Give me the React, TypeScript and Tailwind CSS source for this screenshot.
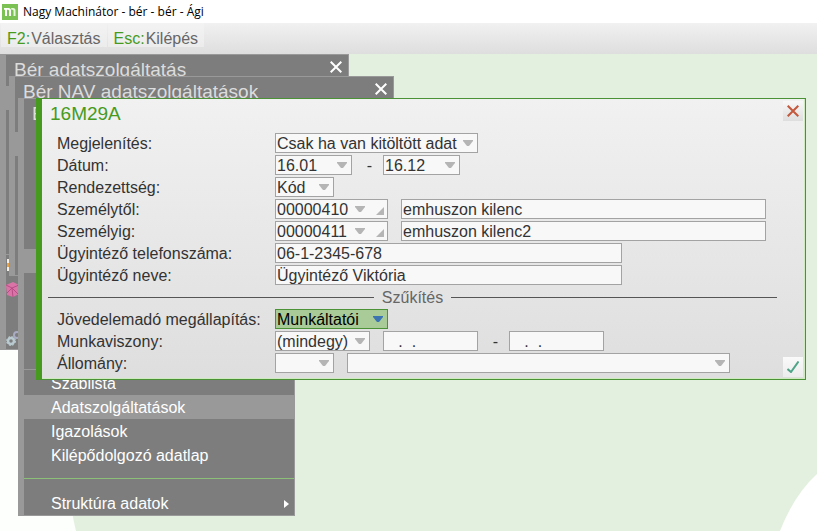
import type { ReactNode } from "react";

function Backdrop() {
  return (
    <svg className="absolute inset-0 h-full w-full" viewBox="0 0 817 477" preserveAspectRatio="none" aria-hidden="true">
      <rect width="817" height="477" fill="#e4f0df" />
      <path d="M0 0H130Q40 330 76 477H0Z" fill="#fcfffb" />
      <path d="M817 420Q794 441 780 477H817Z" fill="#fff" />
    </svg>
  );
}

function Logo() {
  return (
    <svg width="16" height="16" viewBox="0 0 16 16" aria-hidden="true">
      <rect width="16" height="16" fill="#7cc153" />
      <path d="M2 4H6.500Q9 4 9 6.500V12H7V7Q7 5.800 6 5.800H5V12H3V5.800H2Z" fill="#fff" />
      <path d="M9 4H11Q13.500 4 13.500 6.500V12H11.500V7Q11.500 5.800 10.500 5.800H9.500Z" fill="#e6f6da" />
    </svg>
  );
}

function Cross() {
  return (
    <svg width="12" height="12" viewBox="0 0 12 12" aria-hidden="true">
      <path d="M0.700 0.700L11.300 11.300M11.300 0.700L0.700 11.300" stroke="currentColor" strokeWidth="2" fill="none" />
    </svg>
  );
}

function Arrow() {
  return (
    <svg width="10" height="6" viewBox="0 0 10 6" aria-hidden="true">
      <path d="M0 0H10V1L6 6H4L0 1Z" fill="currentColor" />
    </svg>
  );
}

function MenuHeader({ title }: { title: string }) {
  return (
    <div className="flex h-[31px] items-start justify-between pl-2 pr-[6px] pt-[4px] text-[19px] leading-[22px] text-[#dcdcdc]">
      <span>{title}</span>
      <button type="button" aria-label="Bezárás" className="mt-[2px] text-white">
        <Cross />
      </button>
    </div>
  );
}

function MenuRow({ label, active, more }: { label: string; active?: boolean; more?: boolean }) {
  return (
    <button
      type="button"
      className={`flex h-6 w-full items-center justify-between pl-[27px] pr-[5px] pt-[2px] text-left text-[16px] leading-[22px] text-white ${active ? "bg-[#999]" : ""}`}
    >
      {label}
      {more && (
        <svg width="5" height="8" viewBox="0 0 5 8" aria-hidden="true">
          <path d="M0 0L5 4L0 8Z" fill="#fff" />
        </svg>
      )}
    </button>
  );
}

type PickProps = { id?: string; label?: string; value: string; width: string; selected?: boolean; corner?: boolean };

function Pick({ id, label, value, width, selected, corner }: PickProps) {
  return (
    <div className={`relative h-5 ${width}`}>
      <select
        id={id}
        aria-label={label}
        className={`block h-5 w-full appearance-none border pl-px pt-px text-[16px] leading-[18px] outline-none ${
          selected ? "border-[#4b9135] bg-[#a9cb97] text-black" : "border-[#a3a3a3] bg-[#f8f8f8] text-[#333]"
        }`}
      >
        <option>{value}</option>
      </select>
      <span
        className={`pointer-events-none absolute top-[7px] ${corner ? "right-[23px]" : "right-[5px]"} ${
          selected ? "text-[#3b74b0]" : "text-[#b5b5b5]"
        }`}
      >
        <Arrow />
      </span>
      {corner && (
        <svg className="pointer-events-none absolute right-1 top-2" width="8" height="8" viewBox="0 0 8 8" aria-hidden="true">
          <path d="M8 0V8H0Z" fill="#b5b5b5" />
        </svg>
      )}
    </div>
  );
}

type FieldProps = { id?: string; label?: string; value: string; width: string };

function Field({ id, label, value, width }: FieldProps) {
  return (
    <input
      id={id}
      aria-label={label}
      defaultValue={value}
      className={`block h-5 border border-[#a3a3a3] bg-[#f8f8f8] pl-px pt-px text-[16px] leading-[18px] text-[#333] outline-none ${width}`}
    />
  );
}

function Row({ label, htmlFor, children }: { label: string; htmlFor: string; children: ReactNode }) {
  return (
    <div className="flex h-5 items-center">
      <label htmlFor={htmlFor} className="w-[218px] shrink-0 whitespace-nowrap pt-[2px]">
        {label}
      </label>
      {children}
    </div>
  );
}

function Dash() {
  return <span className="w-[31px] pl-1 pt-[2px] text-center">-</span>;
}

function FilterDialog() {
  return (
    <section className="absolute left-9 right-[11px] top-[44px] border border-l-[6px] border-[#4b9135] border-l-[#469b1f] bg-linear-to-b from-[#f1f1f1] to-[#dedede] pb-[6px] text-[16px] leading-5 text-[#333] shadow-[inset_-1px_-1px_0_#cdebbf]">
      <header className="flex h-[34px] items-start justify-between pl-2 pr-[2px] pt-[2px]">
        <h1 className="pt-[2px] text-[19px] leading-[22px] text-[#469b1f]">16M29A</h1>
        <button
          type="button"
          aria-label="Bezárás"
          className="flex size-5 items-center justify-center bg-linear-to-b from-[#f8f8f8] to-[#dedede] text-[#c4573c]"
        >
          <Cross />
        </button>
      </header>
      <form>
        <div className="flex flex-col gap-[2px] pl-[15px] pr-[39px]">
          <Row label="Megjelenítés:" htmlFor="view">
            <Pick id="view" value="Csak ha van kitöltött adat" width="w-[203px]" />
          </Row>
          <Row label="Dátum:" htmlFor="from">
            <Pick id="from" value="16.01" width="w-[77px]" />
            <Dash />
            <Pick label="Dátum vége" value="16.12" width="w-[77px]" />
          </Row>
          <Row label="Rendezettség:" htmlFor="order">
            <Pick id="order" value="Kód" width="w-[59px]" />
          </Row>
          <Row label="Személytől:" htmlFor="person-from">
            <Pick id="person-from" value="00000410" width="mr-[13px] w-[113px]" corner />
            <Field label="Személytől neve" value="emhuszon kilenc" width="flex-1" />
          </Row>
          <Row label="Személyig:" htmlFor="person-to">
            <Pick id="person-to" value="00000411" width="mr-[13px] w-[113px]" corner />
            <Field label="Személyig neve" value="emhuszon kilenc2" width="flex-1" />
          </Row>
          <Row label="Ügyintéző telefonszáma:" htmlFor="phone">
            <Field id="phone" value="06-1-2345-678" width="w-[347px]" />
          </Row>
          <Row label="Ügyintéző neve:" htmlFor="clerk">
            <Field id="clerk" value="Ügyintéző Viktória" width="w-[347px]" />
          </Row>
        </div>
        <div className="my-[2px] ml-[6px] mr-7 flex h-5 items-center gap-2 text-[#666]">
          <span className="h-px flex-1 bg-[#555]" />
          <span className="pt-[2px]">Szűkítés</span>
          <span className="h-px flex-1 bg-[#555]" />
        </div>
        <div className="flex items-end justify-between pr-[2px]">
          <div className="flex flex-col gap-[2px] pl-[15px]">
            <Row label="Jövedelemadó megállapítás:" htmlFor="tax">
              <Pick id="tax" value="Munkáltatói" width="w-[113px]" selected />
            </Row>
            <Row label="Munkaviszony:" htmlFor="job">
              <Pick id="job" value="(mindegy)" width="mr-[13px] w-[95px]" />
              <Field label="Munkaviszony kezdete" value="   .  ." width="w-[95px]" />
              <Dash />
              <Field label="Munkaviszony vége" value="   .  ." width="w-[95px]" />
            </Row>
            <Row label="Állomány:" htmlFor="staff">
              <Pick id="staff" value="" width="mr-[13px] w-[59px]" />
              <Pick label="Állomány neve" value="" width="w-[383px]" />
            </Row>
          </div>
          <button
            type="submit"
            aria-label="Rendben"
            className="-mb-1 flex size-5 items-center justify-center bg-linear-to-b from-[#fafafa] to-[#ececec]"
          >
            <svg width="12" height="12" viewBox="0 0 12 12" aria-hidden="true">
              <path d="M0.500 8L4 11L11.500 0.500" fill="none" stroke="#4fa58a" strokeWidth="2" />
            </svg>
          </button>
        </div>
      </form>
    </section>
  );
}

export default function App() {
  return (
    <div className="flex min-h-screen flex-col bg-white font-['Liberation_Sans',Arial,sans-serif]">
      <header className="flex h-[23px] items-center gap-[5px] pl-[2px] font-['Open_Sans',sans-serif] text-[12px] text-black">
        <Logo />
        Nagy Machinátor - bér - bér - Ági
      </header>
      <nav className="flex h-[31px] gap-px bg-linear-to-b from-[#f1f1f1] to-[#dedede] px-px pb-[7px] text-[16px] text-[#666]">
        <button type="button" className="flex items-center gap-px bg-linear-to-b from-[#f3f3f3] to-[#ececec] px-[6px] pt-2">
          <span className="text-[#469b1f]">F2:</span>Választás
        </button>
        <button type="button" className="flex items-center gap-px bg-linear-to-b from-[#f3f3f3] to-[#ececec] px-[6px] pt-2">
          <span className="text-[#469b1f]">Esc:</span>Kilépés
        </button>
      </nav>
      <main className="relative flex-1 overflow-hidden">
        <Backdrop />

        <section className="absolute left-0 top-0 h-[296px] w-[349px] border border-l-[6px] border-[#999] bg-[#7d7d7d]">
          <MenuHeader title="Bér adatszolgáltatás" />
          <div className="h-6 bg-[#999]" />
          <div className="mt-[144px] border-t border-[#999]" />
          <svg className="absolute left-0 top-[204px]" width="14" height="90" viewBox="0 0 14 90" aria-hidden="true">
            <path d="M1 0H3V12H1Z" fill="#f4efe6" />
            <path d="M1 4H3V8H1Z" fill="#e8a040" />
            <path d="M0 26L7 23L13 26V35L7 38L1 36Z" fill="#db74a6" />
            <path d="M0 26L6 29L13 26M6 29L7 38M1 34L6 29L12 35" stroke="#b84c86" fill="none" />
            <circle cx="11" cy="76" r="3" fill="none" stroke="#a9abc2" strokeWidth="2" />
            <circle cx="5" cy="82" r="3" fill="none" stroke="#b9cbd0" strokeWidth="2.500" />
            <circle cx="5" cy="82" r="4.500" fill="none" stroke="#b9cbd0" strokeWidth="1" strokeDasharray="2 1.530" />
          </svg>
        </section>

        <section className="absolute left-[9px] top-[22px] h-[200px] w-[385px] border border-l-[6px] border-[#999] bg-[#7d7d7d]">
          <MenuHeader title="Bér NAV adatszolgáltatások" />
          <div className="mt-6 h-6 bg-[#999]" />
        </section>

        <section className="absolute left-[18px] top-[44px] w-[277px] border border-l-[6px] border-[#999] bg-[#7d7d7d]">
          <MenuHeader title="B" />
          <div className="mt-[119px] h-6 bg-[#999]" />
          <div className="mb-px mt-24 border-t border-[#999]" />
          <MenuRow label="Szablista" />
          <MenuRow label="Adatszolgáltatások" active />
          <MenuRow label="Igazolások" />
          <MenuRow label="Kilépődolgozó adatlap" />
          <hr className="mb-3 mt-[11px] border-[#8cbf78]" />
          <MenuRow label="Struktúra adatok" more />
        </section>

        <FilterDialog />
      </main>
    </div>
  );
}
